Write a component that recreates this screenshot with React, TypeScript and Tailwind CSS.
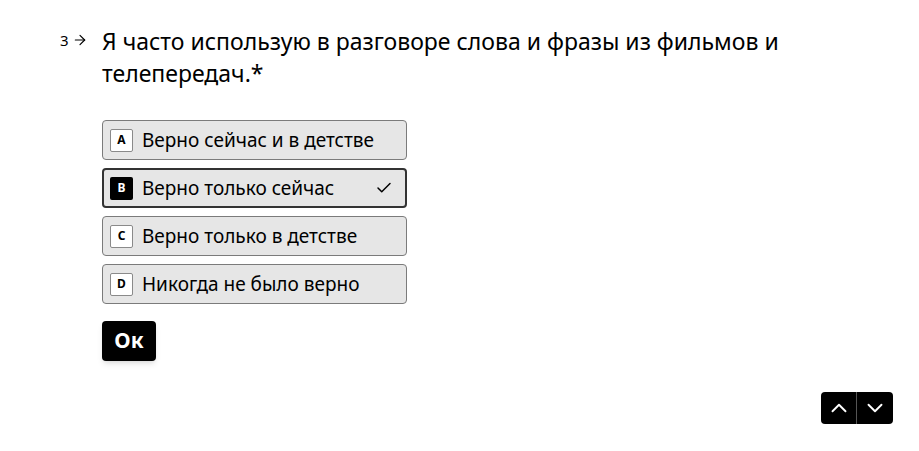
import { Check, ChevronUp, ChevronDown, ArrowRight } from "lucide-react";

const options = [
  { key: "A", label: "Верно сейчас и в детстве" },
  { key: "B", label: "Верно только сейчас", selected: true },
  { key: "C", label: "Верно только в детстве" },
  { key: "D", label: "Никогда не было верно" },
];

export default function App() {
  return (
    <div className="relative w-[919px] h-[451px] bg-white text-black font-['Noto_Sans',sans-serif]">
      <div className="flex pl-[60px] pt-[25px]">
        {/* Question number */}
        <div className="w-[42px] flex items-center h-[24px] mt-[3px] text-[15px]">
          <span>3</span>
          <ArrowRight className="w-[16px] h-[16px] ml-[3px]" strokeWidth={1.75} />
        </div>

        <div className="flex flex-col">
          <h1 className="w-[720px] text-[23px] leading-[32px]">
            Я часто использую в разговоре слова и фразы из фильмов и телепередач.*
          </h1>

          <div className="flex flex-col gap-2 mt-[31px] w-[305px]">
            {options.map((o) => (
              <div
                key={o.key}
                className={`h-[40px] flex items-center rounded-[4px] bg-[#e6e6e6] ${
                  o.selected ? "border-2 border-[#333333] px-[6px]" : "border border-[#7b7b7b] px-[7px]"
                }`}
              >
                <span
                  className={`w-[23px] h-[23px] flex items-center justify-center rounded-[2px] text-[12px] font-bold ${
                    o.selected ? "bg-black text-white" : "bg-white border border-[#8a8a8a]"
                  }`}
                >
                  {o.key}
                </span>
                <span className="ml-[9px] text-[19px] leading-none flex-1">{o.label}</span>
                {o.selected && <Check className="w-[18px] h-[18px] mr-[6px]" strokeWidth={2} />}
              </div>
            ))}
          </div>

          <button className="mt-[17px] w-[54px] h-[40px] rounded-[4px] bg-black text-white text-[21px] font-bold shadow-md">
            Ок
          </button>
        </div>
      </div>

      {/* Navigation */}
      <div className="absolute right-[26px] bottom-[27px] flex rounded-[4px] overflow-hidden">
        <button className="w-[36px] h-[32px] bg-black text-white flex items-center justify-center border-r border-[#555]">
          <ChevronUp className="w-[26px] h-[26px]" strokeWidth={1.75} />
        </button>
        <button className="w-[36px] h-[32px] bg-black text-white flex items-center justify-center">
          <ChevronDown className="w-[26px] h-[26px]" strokeWidth={1.75} />
        </button>
      </div>
    </div>
  );
}
